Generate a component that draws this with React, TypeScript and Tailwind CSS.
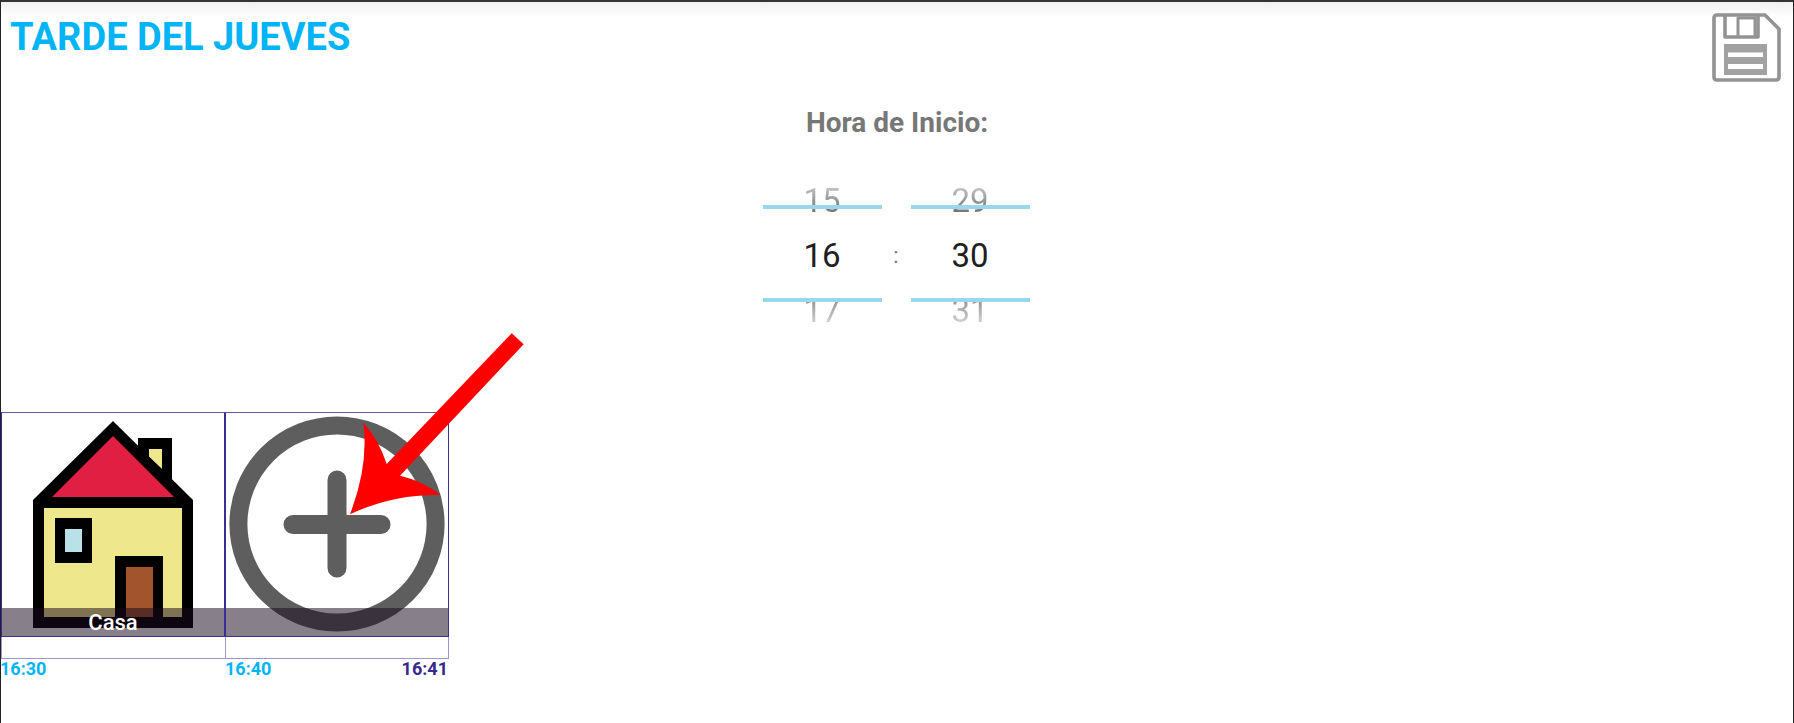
function SaveIcon() {
  return (
    <svg width="76" height="76" viewBox="1708 9 76 76" fill="none" stroke="#939393" strokeWidth="3.6" strokeLinejoin="round" className="block blur-[0.6px]">
      <path d="M1717 15 H1765 L1779 29 V77 Q1779 80 1776 80 H1717 Q1714 80 1714 77 V18 Q1714 15 1717 15 Z" />
      <path d="M1725 15 V37 H1758 V15" />
      <path d="M1738 36 V18 H1755 V36" strokeWidth="3" />
      <path d="M1724 44 H1767 V75 H1724 Z" fill="#a2a2a2" stroke="none" />
      <path d="M1728 52.5 H1763 V57 H1728 Z M1728 64 H1763 V69 H1728 Z" fill="#ffffff" stroke="none" />
    </svg>
  );
}

function House() {
  return (
    <svg width="222" height="223" viewBox="2 413 222 223" className="block">
      <path d="M138 438 H172 V480 H138 Z" fill="#000" />
      <path d="M149 449 H162 V469 L149 457 Z" fill="#efe78b" />
      <path d="M113 421 L193 500 V628 H33 V500 Z" fill="#000" />
      <path d="M113 436 L174 497 H52 Z" fill="#e01f42" />
      <path d="M44 508 H182 V617 H44 Z" fill="#efe78b" />
      <path d="M55 518 H92 V563 H55 Z" fill="#000" />
      <path d="M65 529 H82 V552 H65 Z" fill="#b9e2e8" />
      <path d="M115 556 H163 V628 H115 Z" fill="#000" />
      <path d="M126 567 H153 V617 H126 Z" fill="#a2552c" />
    </svg>
  );
}

function PlusCircle() {
  return (
    <svg width="222" height="223" viewBox="226 413 222 223" className="block">
      <circle cx="337" cy="524" r="98.6" fill="none" stroke="#5e5e5e" strokeWidth="18" />
      <path d="M337 480 V568 M293 524.5 H381" stroke="#5e5e5e" strokeWidth="19" strokeLinecap="round" />
    </svg>
  );
}

function Arrow() {
  return (
    <svg width="200" height="220" viewBox="340 330 200 220" className="absolute left-[339px] top-[328px]">
      <path
        d="M511.7 333.3 L523.7 344.3 L400 475.7 Q423 481 440.7 495 Q393 494 350 514.3 Q369 465 363.3 422.7 Q378 438 386.7 464 Z"
        fill="#ff0000"
      />
    </svg>
  );
}

function Wheel({ top, mid, bottom }: { top: string; mid: string; bottom: string }) {
  return (
    <div className="relative flex h-[165px] w-[119px] flex-col items-center text-[33px] leading-[55px]">
      <div className="bg-linear-to-b from-[#f4f4f4] to-[#444444] bg-clip-text text-transparent">{top}</div>
      <div className="text-[#202020]">{mid}</div>
      <div className="bg-linear-to-b from-[#666666] to-[#ffffff] bg-clip-text text-transparent">{bottom}</div>
      <div className="absolute left-0 right-0 top-[32px] h-1 bg-[#97d8ee]" />
      <div className="absolute left-0 right-0 top-[125px] h-1 bg-[#97d8ee]" />
    </div>
  );
}

function Band({ label }: { label?: string }) {
  return (
    <div className="absolute bottom-0 left-0 right-0 flex h-[28px] justify-center bg-[#18091c]/[0.52] text-[22px] font-medium leading-[30px] text-white">
      {label}
    </div>
  );
}

export default function App() {
  return (
    <div className="relative h-[723px] w-[1794px] overflow-hidden border-x border-t-2 border-x-[#222] border-t-[#333] bg-linear-to-b from-[#f0f0f0] to-white to-[2%] font-['Roboto',sans-serif]">
      <header className="flex items-start justify-between pl-[9px] pr-[9px] pt-[7px]">
        <h1 className="mt-[6px] text-[38px] font-bold leading-[44px] text-[#00b4f5]">TARDE DEL JUEVES</h1>
        <SaveIcon />
      </header>
      <section className="mt-[23px] flex flex-col items-center">
        <p className="text-[28px] font-bold leading-[30px] text-[#777777]">Hora de Inicio:</p>
        <div className="mt-[35px] mr-[2px] flex items-center gap-[14.5px]">
          <Wheel top="15" mid="16" bottom="17" />
          <span className="flex w-0 justify-center text-[22px] text-[#777777]">:</span>
          <Wheel top="29" mid="30" bottom="31" />
        </div>
      </section>
      <section className="mt-[74px] w-[448px]">
        <div className="flex">
          <div className="w-[225px]">
            <div className="relative border-y border-l border-r-2 border-l-[#3a2d96] border-r-[#3a2d96] border-b-[#3a2d96] border-t-[#3a2d96]/80">
              <House />
              <Band label="Casa" />
            </div>
            <div className="h-[22px] border-x border-b border-[#3a2d96]/50" />
          </div>
          <div className="w-[223px]">
            <div className="relative border-r border-b border-t border-r-[#3a2d96] border-b-[#3a2d96] border-t-[#3a2d96]/80">
              <PlusCircle />
              <Band />
            </div>
            <div className="h-[22px] border-r border-b border-[#3a2d96]/50" />
          </div>
        </div>
        <div className="-ml-px flex text-[18px] font-bold leading-[19px]">
          <div className="w-[225px] text-[#00b4f5]">16:30</div>
          <div className="flex w-[224px] justify-between pr-[1px]">
            <span className="text-[#00b4f5]">16:40</span>
            <span className="text-[#352a8c]">16:41</span>
          </div>
        </div>
      </section>
      <Arrow />
    </div>
  );
}
